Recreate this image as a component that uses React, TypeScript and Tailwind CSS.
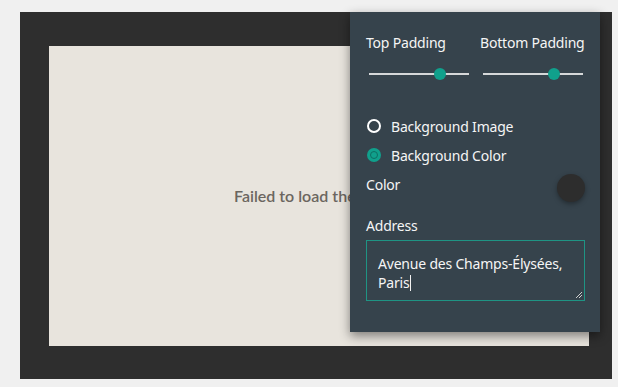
const Slider = ({ value }: { value: number }) => (
  <div className="relative mx-[3px] h-3 w-[100px]">
    <div className="absolute left-0 right-0 top-[5px] h-[2px] bg-[#d6d8d9]" />
    <div
      className="absolute top-0 h-3 w-3 -translate-x-1/2 rounded-full bg-[#10a08c]"
      style={{ left: `${value}%` }}
    />
  </div>
);

const Radio = ({ checked, label }: { checked?: boolean; label: string }) => (
  <div className="flex h-5 items-center gap-[10px]">
    {checked ? (
      <span className="flex h-[14px] w-[14px] items-center justify-center rounded-full bg-[#10a08c]">
        <span className="h-2 w-2 rounded-full border border-[#0d6f63] bg-[#10a08c]" />
      </span>
    ) : (
      <span className="h-[14px] w-[14px] rounded-full border-2 border-white" />
    )}
    <span>{label}</span>
  </div>
);

export default function App() {
  return (
    <div className="h-[387px] w-[618px] bg-[#f0f0f0] pl-5 pt-3">
      <div className="relative h-[367px] w-[592px] bg-[#2e2e2e] pl-[29px] pt-[34px]">
        <div className="flex h-[300px] w-[540px] items-center whitespace-nowrap bg-[#e8e4dd] pl-[185px] font-['Lato',sans-serif] text-[16px] font-semibold text-[#6b6660]">
          Failed to load the map.
        </div>

        <div className="absolute left-[330px] top-0 h-[320px] w-[250px] bg-[#36434c] pl-4 pt-[21px] font-['Noto_Sans',sans-serif] text-[14px] tracking-[-0.2px] text-[#f5f5f5] shadow-[0_4px_10px_rgba(0,0,0,0.45)]">
          <div className="grid w-[218px] grid-cols-2 gap-x-[10px] whitespace-nowrap">
            <div>
              <div className="h-5 leading-5">Top Padding</div>
              <div className="mt-[15px]">
                <Slider value={71} />
              </div>
            </div>
            <div>
              <div className="h-5 leading-5">Bottom Padding</div>
              <div className="mt-[15px]">
                <Slider value={71} />
              </div>
            </div>
          </div>

          <div className="mt-[36px] flex flex-col gap-[9px] pl-[1px]">
            <Radio label="Background Image" />
            <Radio checked label="Background Color" />
          </div>

          <div className="mt-[9px] flex h-5 w-[219px] items-center justify-between">
            <span>Color</span>
            <span className="mt-2 h-7 w-7 rounded-full bg-[#2d2d2d] shadow-[0_2px_5px_rgba(0,0,0,0.35)]" />
          </div>

          <div className="mt-[22px] h-5 leading-5">Address</div>

          <div className="relative mt-[4px] h-[61px] w-[219px] border border-[#1f9484] px-[11px] pt-[13px] leading-[19px]">
            <div>Avenue des Champs-Élysées,</div>
            <div className="flex items-center">
              Paris
              <span className="ml-[1px] inline-block h-[16px] w-px bg-[#f2f2f2]" />
            </div>
            <svg className="absolute bottom-[2px] right-[2px]" width="7" height="7" viewBox="0 0 7 7">
              <path d="M1 7 L7 1 M4 7 L7 4" stroke="#d0d0d0" strokeWidth="1" />
            </svg>
          </div>
        </div>
      </div>
    </div>
  );
}
